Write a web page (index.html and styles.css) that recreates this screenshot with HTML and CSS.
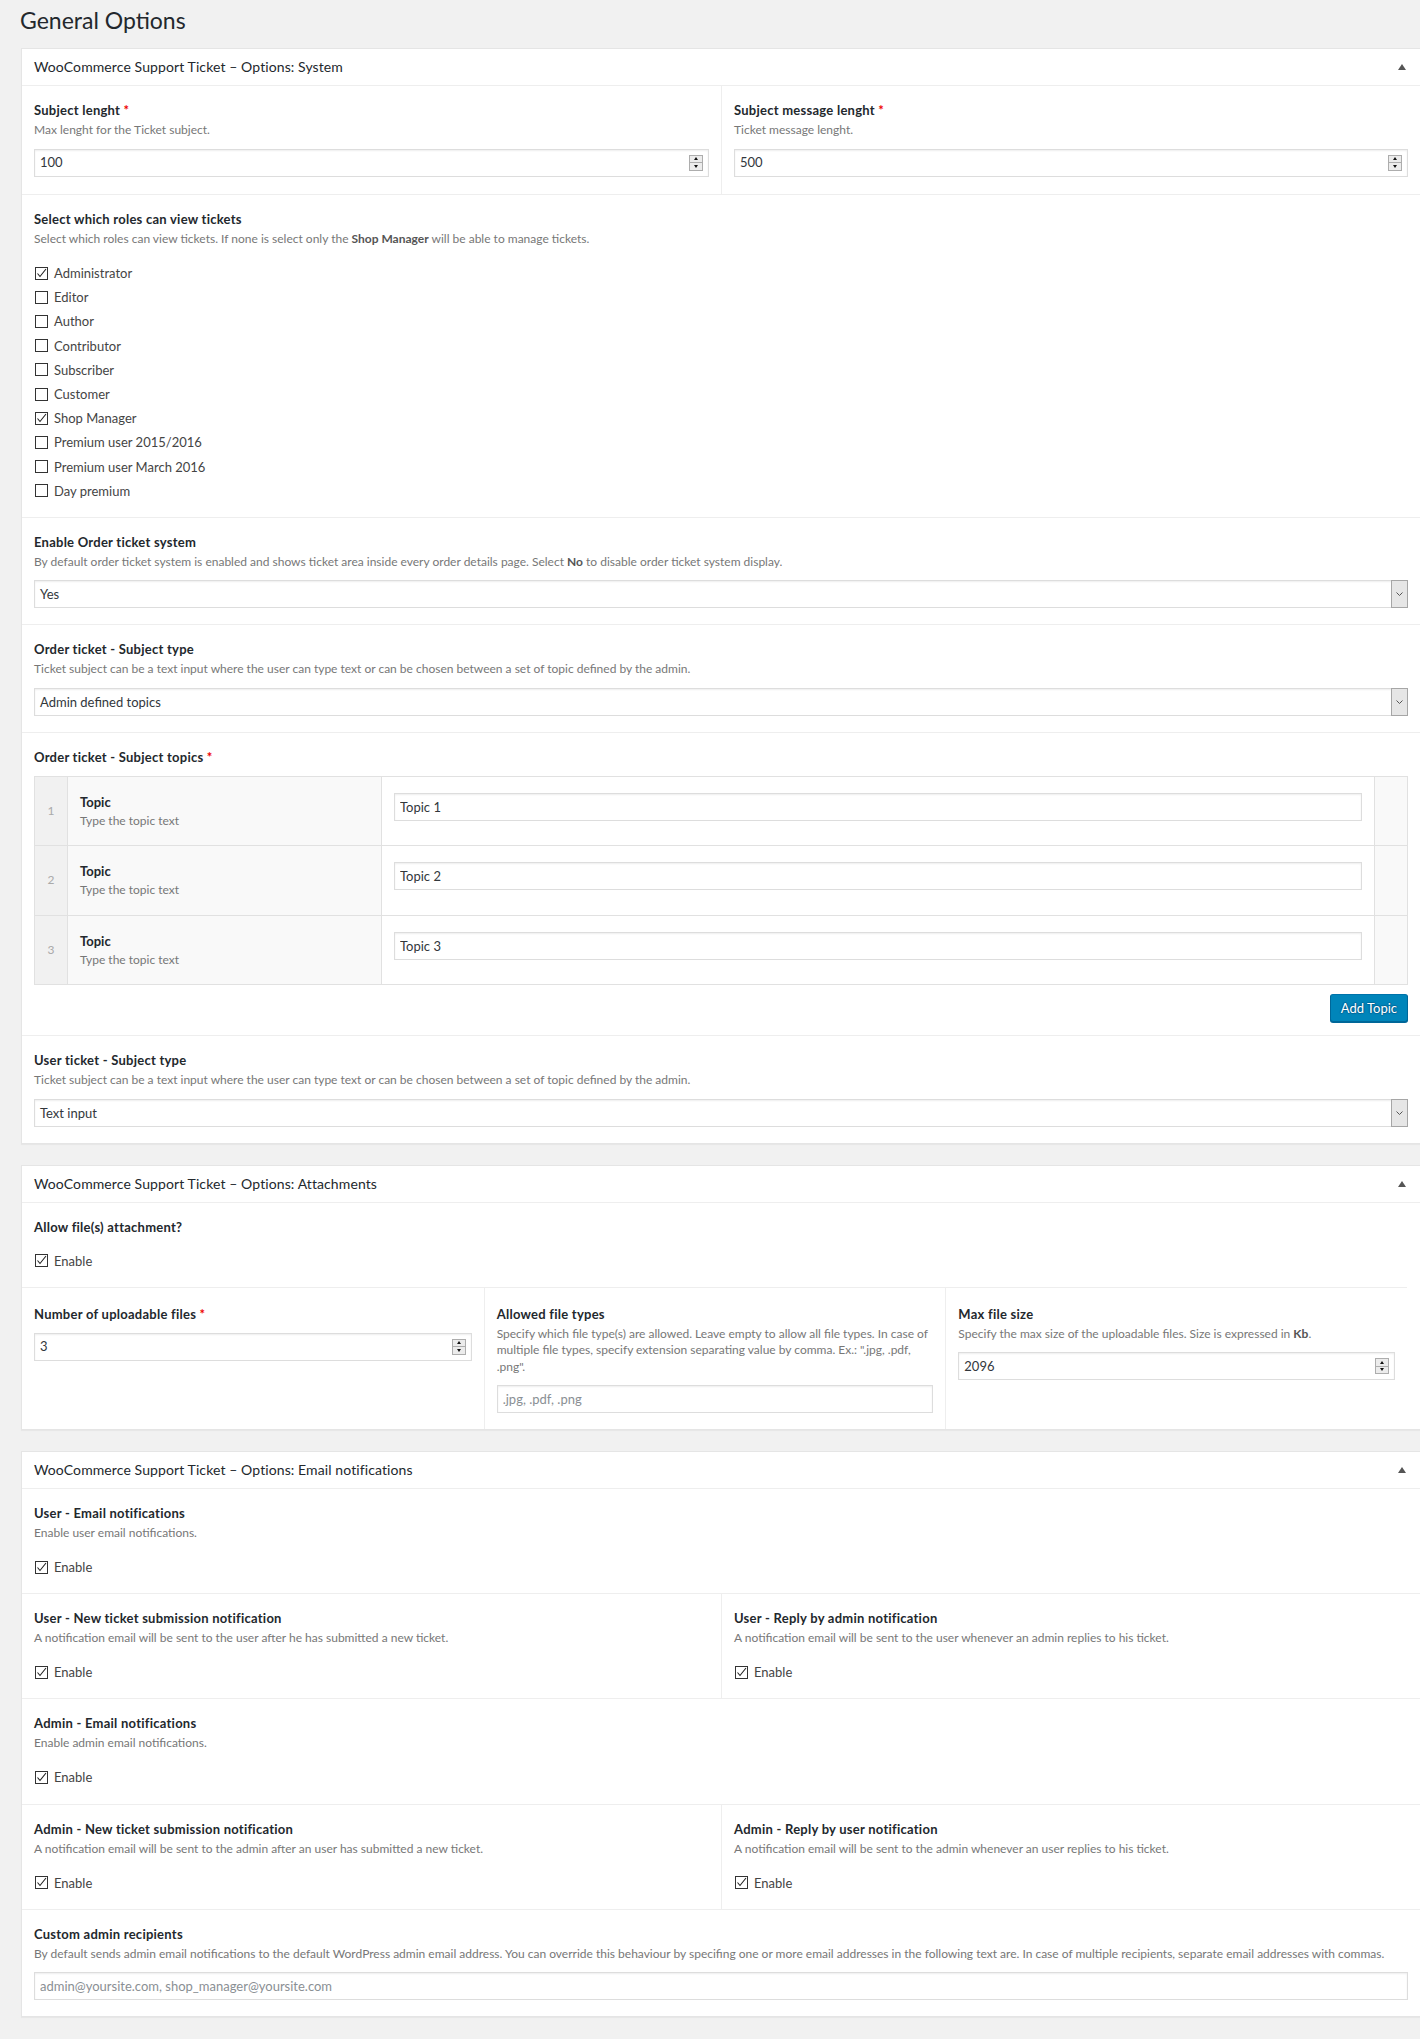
FILE: index.html
```html
<!DOCTYPE html>
<html>
	<head>
		<meta charset="UTF-8">
		<title>General Options</title>
		<link rel="stylesheet" href="styles.css">
	</head>
	<body>
		<div class="wrap">
			<h1>General Options</h1>

			<!-- System -->
			<div class="postbox">
				<div class="hndle"><span>WooCommerce Support Ticket &ndash; Options: System</span><i class="toggle"></i></div>
				<div class="row cols-2 first">
					<div class="field">
						<label class="title">Subject lenght <em>*</em></label>
						<p class="desc">Max lenght for the Ticket subject.</p>
						<div class="input number"><input type="text" value="100"><span class="spin"><b class="up"></b><b class="down"></b></span></div>
					</div>
					<div class="field">
						<label class="title">Subject message lenght <em>*</em></label>
						<p class="desc">Ticket message lenght.</p>
						<div class="input number"><input type="text" value="500"><span class="spin"><b class="up"></b><b class="down"></b></span></div>
					</div>
				</div>
				<div class="row field checkbox">
					<label class="title">Select which roles can view tickets</label>
					<p class="desc">Select which roles can view tickets. If none is select only the <b>Shop Manager</b> will be able to manage tickets.</p>
					<div class="checks">
						<label class="check"><span class="cb on"><svg width="11" height="11" viewBox="0 0 11 11"><path d="M1.5 5.5L4 8.5L10 1"/></svg></span>Administrator</label>
						<label class="check"><span class="cb"></span>Editor</label>
						<label class="check"><span class="cb"></span>Author</label>
						<label class="check"><span class="cb"></span>Contributor</label>
						<label class="check"><span class="cb"></span>Subscriber</label>
						<label class="check"><span class="cb"></span>Customer</label>
						<label class="check"><span class="cb on"><svg width="11" height="11" viewBox="0 0 11 11"><path d="M1.5 5.5L4 8.5L10 1"/></svg></span>Shop Manager</label>
						<label class="check"><span class="cb"></span>Premium user 2015/2016</label>
						<label class="check"><span class="cb"></span>Premium user March 2016</label>
						<label class="check"><span class="cb"></span>Day premium</label>
					</div>
				</div>
				<div class="row field">
					<label class="title">Enable Order ticket system</label>
					<p class="desc">By default order ticket system is enabled and shows ticket area inside every order details page. Select <b>No</b> to disable order ticket system display.</p>
					<div class="input select"><span>Yes</span><span class="arrow"><svg width="15" height="26" viewBox="0 0 15 26"><path d="M4.5 11.5L7.5 14.5L10.5 11.5"/></svg></span></div>
				</div>
				<div class="row field">
					<label class="title">Order ticket - Subject type</label>
					<p class="desc">Ticket subject can be a text input where the user can type text or can be chosen between a set of topic defined by the admin.</p>
					<div class="input select"><span>Admin defined topics</span><span class="arrow"><svg width="15" height="26" viewBox="0 0 15 26"><path d="M4.5 11.5L7.5 14.5L10.5 11.5"/></svg></span></div>
				</div>
				<div class="row field topics-field">
					<label class="title">Order ticket - Subject topics <em>*</em></label>
					<table class="topics">
						<colgroup><col class="c-n"><col class="c-l"><col><col class="c-h"></colgroup>
						<tr>
							<td class="n">1</td>
							<td class="lbl"><strong>Topic</strong><span>Type the topic text</span></td>
							<td class="val"><input class="input" type="text" value="Topic 1"></td>
							<td class="handle"></td>
						</tr>
						<tr>
							<td class="n">2</td>
							<td class="lbl"><strong>Topic</strong><span>Type the topic text</span></td>
							<td class="val"><input class="input" type="text" value="Topic 2"></td>
							<td class="handle"></td>
						</tr>
						<tr>
							<td class="n">3</td>
							<td class="lbl"><strong>Topic</strong><span>Type the topic text</span></td>
							<td class="val"><input class="input" type="text" value="Topic 3"></td>
							<td class="handle"></td>
						</tr>
					</table>
					<div class="actions"><button class="button">Add Topic</button></div>
				</div>
				<div class="row field">
					<label class="title">User ticket - Subject type</label>
					<p class="desc">Ticket subject can be a text input where the user can type text or can be chosen between a set of topic defined by the admin.</p>
					<div class="input select"><span>Text input</span><span class="arrow"><svg width="15" height="26" viewBox="0 0 15 26"><path d="M4.5 11.5L7.5 14.5L10.5 11.5"/></svg></span></div>
				</div>
			</div>

			<!-- Attachments -->
			<div class="postbox">
				<div class="hndle"><span>WooCommerce Support Ticket &ndash; Options: Attachments</span><i class="toggle"></i></div>
				<div class="row field checkbox">
					<label class="title">Allow file(s) attachment?</label>
					<div class="checks">
						<label class="check"><span class="cb on"><svg width="11" height="11" viewBox="0 0 11 11"><path d="M1.5 5.5L4 8.5L10 1"/></svg></span>Enable</label>
					</div>
				</div>
				<div class="row cols-3">
					<div class="field">
						<label class="title">Number of uploadable files <em>*</em></label>
						<div class="input number"><input type="text" value="3"><span class="spin"><b class="up"></b><b class="down"></b></span></div>
					</div>
					<div class="field">
						<label class="title">Allowed file types</label>
						<p class="desc">Specify which file type(s) are allowed. Leave empty to allow all file types. In case of multiple file types, specify extension separating value by comma. Ex.: ".jpg, .pdf, .png".</p>
						<input class="input" type="text" placeholder=".jpg, .pdf, .png">
					</div>
					<div class="field">
						<label class="title">Max file size</label>
						<p class="desc">Specify the max size of the uploadable files. Size is expressed in <b>Kb</b>.</p>
						<div class="input number"><input type="text" value="2096"><span class="spin"><b class="up"></b><b class="down"></b></span></div>
					</div>
				</div>
			</div>

			<!-- Email notifications -->
			<div class="postbox">
				<div class="hndle"><span>WooCommerce Support Ticket &ndash; Options: Email notifications</span><i class="toggle"></i></div>
				<div class="row field checkbox">
					<label class="title">User - Email notifications</label>
					<p class="desc">Enable user email notifications.</p>
					<div class="checks">
						<label class="check"><span class="cb on"><svg width="11" height="11" viewBox="0 0 11 11"><path d="M1.5 5.5L4 8.5L10 1"/></svg></span>Enable</label>
					</div>
				</div>
				<div class="row cols-2">
					<div class="field checkbox">
						<label class="title">User - New ticket submission notification</label>
						<p class="desc">A notification email will be sent to the user after he has submitted a new ticket.</p>
						<div class="checks">
							<label class="check"><span class="cb on"><svg width="11" height="11" viewBox="0 0 11 11"><path d="M1.5 5.5L4 8.5L10 1"/></svg></span>Enable</label>
						</div>
					</div>
					<div class="field checkbox">
						<label class="title">User - Reply by admin notification</label>
						<p class="desc">A notification email will be sent to the user whenever an admin replies to his ticket.</p>
						<div class="checks">
							<label class="check"><span class="cb on"><svg width="11" height="11" viewBox="0 0 11 11"><path d="M1.5 5.5L4 8.5L10 1"/></svg></span>Enable</label>
						</div>
					</div>
				</div>
				<div class="row field checkbox">
					<label class="title">Admin - Email notifications</label>
					<p class="desc">Enable admin email notifications.</p>
					<div class="checks">
						<label class="check"><span class="cb on"><svg width="11" height="11" viewBox="0 0 11 11"><path d="M1.5 5.5L4 8.5L10 1"/></svg></span>Enable</label>
					</div>
				</div>
				<div class="row cols-2">
					<div class="field checkbox">
						<label class="title">Admin - New ticket submission notification</label>
						<p class="desc">A notification email will be sent to the admin after an user has submitted a new ticket.</p>
						<div class="checks">
							<label class="check"><span class="cb on"><svg width="11" height="11" viewBox="0 0 11 11"><path d="M1.5 5.5L4 8.5L10 1"/></svg></span>Enable</label>
						</div>
					</div>
					<div class="field checkbox">
						<label class="title">Admin - Reply by user notification</label>
						<p class="desc">A notification email will be sent to the admin whenever an user replies to his ticket.</p>
						<div class="checks">
							<label class="check"><span class="cb on"><svg width="11" height="11" viewBox="0 0 11 11"><path d="M1.5 5.5L4 8.5L10 1"/></svg></span>Enable</label>
						</div>
					</div>
				</div>
				<div class="row field">
					<label class="title">Custom admin recipients</label>
					<p class="desc">By default sends admin email notifications to the default WordPress admin email address. You can override this behaviour by specifing one or more email addresses in the following text are. In case of multiple recipients, separate email addresses with commas.</p>
					<input class="input" type="text" placeholder="admin@yoursite.com, shop_manager@yoursite.com">
				</div>
			</div>
		</div>
	</body>
</html>
```

FILE: styles.css
```css
body{
	margin: 0;
	background: #f1f1f1;
	font: 13px/1.4 Lato, "Liberation Sans", sans-serif;
	color: #444;
}
.wrap{
	padding: 6px 0 1px 21px;
}
h1{
	margin: 0 0 13px -1px;
	font-size: 23px;
	font-weight: 400;
	line-height: 29px;
	color: #23282d;
}

/* 面板 */
.postbox{
	background: #fff;
	border: 1px solid #e5e5e5;
	border-right: 0;
	box-shadow: 0 1px 1px rgba(0,0,0,.04);
	margin-bottom: 21px;
}
.hndle{
	display: flex;
	align-items: center;
	justify-content: space-between;
	height: 36px;
	padding: 0 14px 0 12px;
	border-bottom: 1px solid #eee;
	font-size: 14px;
	letter-spacing: .1px;
	color: #23282d;
}
.toggle{
	width: 0;
	height: 0;
	border-left: 4px solid transparent;
	border-right: 4px solid transparent;
	border-bottom: 6px solid #555;
}

/* 行与列 */
.row + .row{
	border-top: 1px solid #eee;
}
.cols-2{
	display: grid;
	grid-template-columns: 1fr 1fr;
}
.cols-3{
	display: grid;
	grid-template-columns: repeat(3, 1fr);
	width: calc(100% - 13px);
}
.cols-2 .field + .field,
.cols-3 .field + .field{
	border-left: 1px solid #eee;
}
.field{
	padding: 15px 12px 16px;
}
.first .field{
	padding-bottom: 17.5px;
}
.cols-3 .field{
	padding-top: 16.5px;
}
.field.checkbox{
	padding-bottom: 14px;
}
.title{
	display: block;
	font-weight: 700;
	line-height: 18px;
	letter-spacing: .25px;
	color: #23282d;
}
.title em{
	font-style: normal;
	color: #e00;
}
.desc{
	margin: 3px 0 0;
	font-size: 12px;
	line-height: 16.5px;
	color: #777;
}
.desc b{
	color: #555;
}

/* 输入框 */
.input{
	display: flex;
	align-items: center;
	box-sizing: border-box;
	width: 100%;
	height: 28px;
	margin: 10px 0 0;
	padding: 0 5px;
	border: 1px solid #ddd;
	box-shadow: inset 0 1px 2px rgba(0,0,0,.07);
	background: #fff;
	font: inherit;
	color: #32373c;
	outline: none;
}
.input::placeholder{
	color: #8a8f94;
}
.number input{
	flex: 1;
	min-width: 0;
	padding: 0;
	border: 0;
	background: none;
	font: inherit;
	color: inherit;
	outline: none;
}
.spin{
	display: flex;
	flex-direction: column;
	width: 14px;
	height: 16px;
}
.spin b{
	flex: 1;
	display: flex;
	align-items: center;
	justify-content: center;
	border: 1px solid #adadad;
	background: #ececec;
}
.spin b + b{
	border-top: 0;
}
.spin b::after{
	content: '';
	border-left: 2.5px solid transparent;
	border-right: 2.5px solid transparent;
}
.spin .up::after{
	border-bottom: 3px solid #111;
}
.spin .down::after{
	border-top: 3px solid #111;
}
.select{
	justify-content: space-between;
	padding-right: 0;
}
.select .arrow{
	align-self: stretch;
	width: 15px;
	margin: -1px -1px -1px 0;
	border: 1px solid #a6a6a6;
	background: #e6e6e6;
}
.select .arrow svg{
	display: block;
	fill: none;
	stroke: #555;
	stroke-width: 1;
}

/* 复选框 */
.checks{
	margin-top: 13.5px;
}
.title + .checks{
	margin-top: 13px;
}
.check{
	display: flex;
	align-items: center;
	height: 24.2px;
	color: #444;
}
.cb{
	box-sizing: border-box;
	width: 13px;
	height: 13px;
	margin: 0 6px 0 1px;
	border: 1px solid #333;
	background: #fff;
}
.cb svg{
	display: block;
	fill: none;
	stroke: #222;
	stroke-width: 1.1;
}

/* 主题表格 */
.topics{
	width: 100%;
	margin-top: 10px;
	border-collapse: collapse;
	table-layout: fixed;
}
.topics col.c-n,
.topics col.c-h{
	width: 33px;
}
.topics col.c-l{
	width: 314px;
}
.topics td{
	border: 1px solid #e1e1e1;
	vertical-align: top;
	padding: 0;
}
.topics .n{
	background: #f1f1f1;
	color: #aaa;
	font-size: 12px;
	text-align: center;
	vertical-align: middle;
}
.topics .lbl{
	background: #f9f9f9;
	padding: 16px 12px;
}
.topics .lbl strong{
	display: block;
	line-height: 18px;
	color: #23282d;
}
.topics .lbl span{
	display: block;
	margin-top: 2px;
	font-size: 12px;
	line-height: 16.5px;
	color: #777;
}
.topics .val{
	padding: 16px 12px;
}
.topics .val .input{
	margin: 0;
}
.topics .handle{
	background: #f9f9f9;
}
.topics-field{
	padding-bottom: 13px;
}
.actions{
	display: flex;
	justify-content: flex-end;
	margin-top: 9px;
}
.button{
	height: 28px;
	padding: 0 10px 1px;
	border: 1px solid #0073aa;
	border-color: #0073aa #006799 #006799;
	border-radius: 3px;
	background: #0085ba;
	box-shadow: 0 1px 0 #006799;
	font: inherit;
	line-height: 26px;
	color: #fff;
	text-shadow: 0 -1px 1px #006799, 1px 0 1px #006799, 0 1px 1px #006799, -1px 0 1px #006799;
}
```
